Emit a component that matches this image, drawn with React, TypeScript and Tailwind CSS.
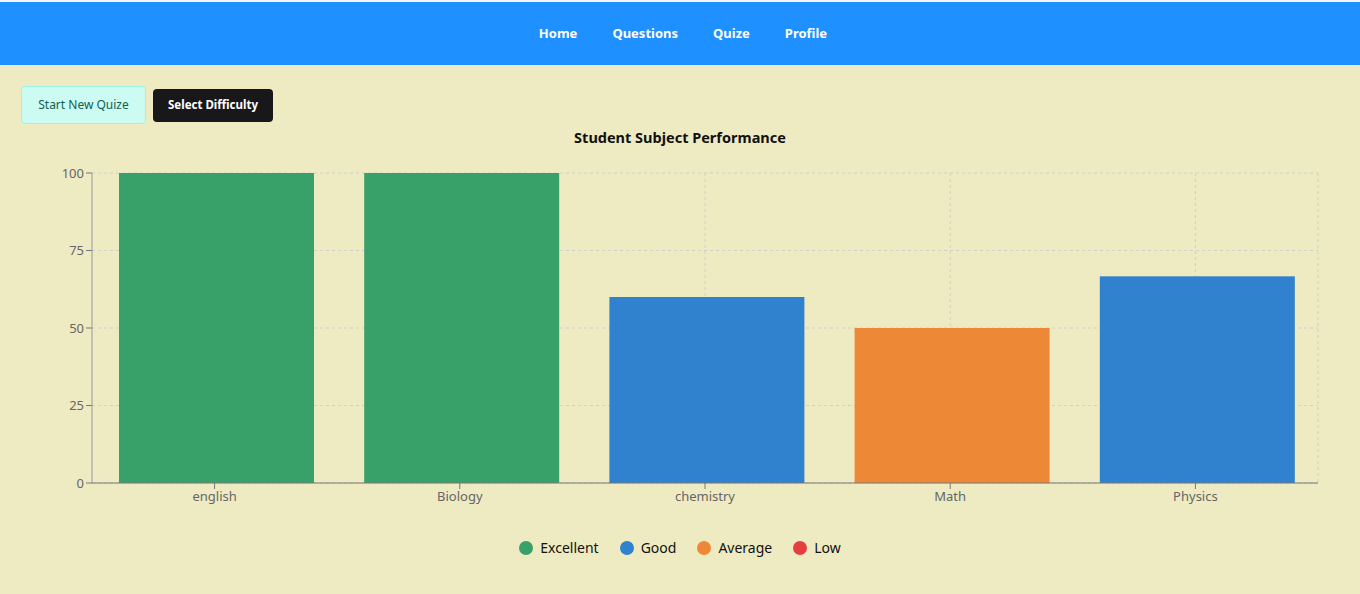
import React from 'react';

const subjects = [
  { name: 'english', score: 100, color: '#38a169' },
  { name: 'Biology', score: 100, color: '#38a169' },
  { name: 'chemistry', score: 60, color: '#3182ce' },
  { name: 'Math', score: 50, color: '#ed8936' },
  { name: 'Physics', score: 66.67, color: '#3182ce' },
];

const legend = [
  { label: 'Excellent', color: 'bg-[#38a169]' },
  { label: 'Good', color: 'bg-[#3182ce]' },
  { label: 'Average', color: 'bg-[#ed8936]' },
  { label: 'Low', color: 'bg-[#e53e3e]' },
];

// plot geometry in svg coords
const LEFT = 92;
const RIGHT = 1318;
const TOP = 13;
const BOTTOM = 323;
const band = (RIGHT - LEFT) / subjects.length;

const yFor = (v: number) => BOTTOM - ((BOTTOM - TOP) * v) / 100;

const PerformanceChart: React.FC = () => {
  const ticks = [0, 25, 50, 75, 100];
  return (
    <svg width={1360} height={350} className="block" style={{ fontFamily: '"Noto Sans", sans-serif' }}>
      {/* grid */}
      <g stroke="#cfd0c6" strokeDasharray="3 3">
        {ticks.map((t) => (
          <line key={t} x1={LEFT} x2={RIGHT} y1={yFor(t)} y2={yFor(t)} />
        ))}
        {subjects.map((s, i) => (
          <line key={s.name} x1={LEFT + band * (i + 0.5)} x2={LEFT + band * (i + 0.5)} y1={TOP} y2={BOTTOM} />
        ))}
        <line x1={RIGHT} x2={RIGHT} y1={TOP} y2={BOTTOM} />
      </g>

      {/* bars */}
      {subjects.map((s, i) => {
        const x = LEFT + band * i + 27;
        const y = yFor(s.score);
        return <rect key={s.name} x={x} y={y} width={195} height={BOTTOM - y} fill={s.color} />;
      })}

      {/* axes */}
      <line x1={LEFT} x2={LEFT} y1={TOP} y2={BOTTOM} stroke="#999" />
      <line x1={LEFT} x2={RIGHT} y1={BOTTOM} y2={BOTTOM} stroke="#777" />
      {ticks.map((t) => (
        <g key={t}>
          <line x1={LEFT - 6} x2={LEFT} y1={yFor(t)} y2={yFor(t)} stroke="#777" />
          <text x={LEFT - 8} y={yFor(t) + 4.5} textAnchor="end" fontSize={13} fill="#666">
            {t}
          </text>
        </g>
      ))}
      {subjects.map((s, i) => {
        const cx = LEFT + band * (i + 0.5);
        return (
          <g key={s.name}>
            <line x1={cx} x2={cx} y1={BOTTOM} y2={BOTTOM + 6} stroke="#777" />
            <text x={cx} y={BOTTOM + 18} textAnchor="middle" fontSize={13} fill="#666">
              {s.name}
            </text>
          </g>
        );
      })}
    </svg>
  );
};

export default function App() {
  return (
    <div className="min-h-[594px] bg-[#eeebc2] font-['Noto_Sans',sans-serif] border-t-2 border-[#f4f4f4]">
      <nav className="h-[63px] bg-[#1e90ff] flex items-center justify-center gap-[35px] pl-[6px] text-white text-[13px] font-bold">
        <a>Home</a>
        <a>Questions</a>
        <a>Quize</a>
        <a>Profile</a>
      </nav>

      <div className="flex items-center gap-[7px] pl-[21px] mt-[21px]">
        <button className="h-[38px] w-[125px] rounded bg-[#ccfbf1] border border-[#99f6e4] text-[#115e59] text-[12px]">
          Start New Quize
        </button>
        <button className="h-[33px] w-[120px] rounded bg-[#18181b] text-white text-[11.5px] font-bold">
          Select Difficulty
        </button>
      </div>

      <h2 className="text-center text-[14.5px] font-bold text-[#111] mt-[3px] leading-[20px]">Student Subject Performance</h2>

      <div className="mt-[13px]">
        <PerformanceChart />
      </div>

      <div className="flex justify-center items-center gap-[21px] text-sm text-[#111] mt-[28px]">
        {legend.map((l) => (
          <div key={l.label} className="flex items-center gap-[7px]">
            <span className={`w-[14px] h-[14px] rounded-full ${l.color}`} />
            <span>{l.label}</span>
          </div>
        ))}
      </div>
    </div>
  );
}
